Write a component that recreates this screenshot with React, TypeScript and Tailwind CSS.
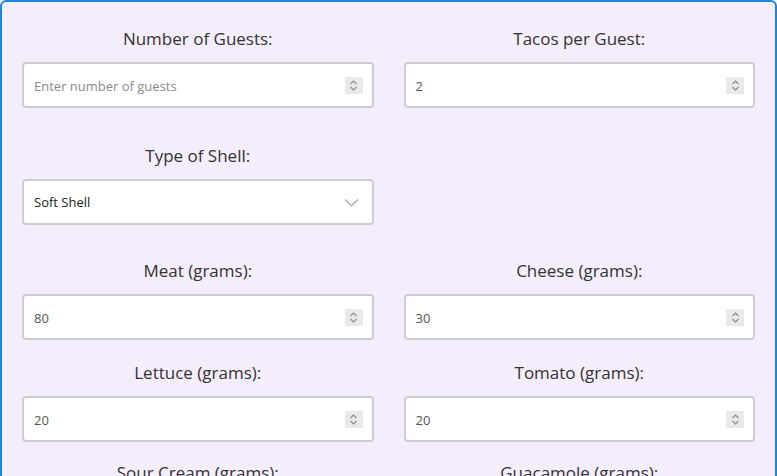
import React from "react";

const Spinner = () => (
  <div className="flex h-[17px] w-[18px] shrink-0 flex-col items-center justify-center bg-[#e9e9ec]">
    <svg width="9" height="13" viewBox="0 0 9 13" fill="none">
      <path d="M1.5 5 L4.5 2 L7.5 5" stroke="#8a8a8f" strokeWidth="1.1" />
      <path d="M1.5 8 L4.5 11 L7.5 8" stroke="#8a8a8f" strokeWidth="1.1" />
    </svg>
  </div>
);

const NumberField = ({ label, value, placeholder }: { label: string; value?: string; placeholder?: string }) => (
  <div className="flex flex-col">
    <label className="mb-[11px] text-center text-[17px] leading-[24px] text-[#333]">{label}</label>
    <div className="flex h-[46px] items-center rounded-[4px] border-2 border-[#cfcdd3] bg-white pl-[10px] pr-[9px]">
      <input
        readOnly
        value={value ?? ""}
        placeholder={placeholder}
        className="min-w-0 flex-1 bg-transparent pt-[3px] text-[13px] text-[#555] outline-none placeholder:text-[#8a8a8f]"
      />
      <Spinner />
    </div>
  </div>
);

const SelectField = ({ label, value }: { label: string; value: string }) => (
  <div className="flex flex-col">
    <label className="mb-[11px] text-center text-[17px] leading-[24px] text-[#333]">{label}</label>
    <div className="flex h-[46px] items-center justify-between rounded-[4px] border-2 border-[#cfcdd3] bg-white pl-[10px] pr-[13px]">
      <span className="pt-[2px] text-[13px] text-[#222]">{value}</span>
      <svg width="15" height="9" viewBox="0 0 15 9" fill="none">
        <path d="M1 1.5 L7.5 7.5 L14 1.5" stroke="#a9a9ad" strokeWidth="1.3" />
      </svg>
    </div>
  </div>
);

export default function App() {
  return (
    <div className="h-[476px] overflow-hidden bg-white" style={{ fontFamily: '"Open Sans", "Noto Sans", sans-serif' }}>
      <div className="min-h-[600px] rounded-[6px] border-2 border-[#1e84e3] bg-[#f3edfc] px-[20px] pt-[25px]">
        <div className="grid grid-cols-2 gap-x-[30px]">
          <NumberField label="Number of Guests:" placeholder="Enter number of guests" />
          <NumberField label="Tacos per Guest:" value="2" />
        </div>
        <div className="mt-[36px] grid grid-cols-2 gap-x-[30px]">
          <SelectField label="Type of Shell:" value="Soft Shell" />
        </div>
        <div className="mt-[34px] grid grid-cols-2 gap-x-[30px]">
          <NumberField label="Meat (grams):" value="80" />
          <NumberField label="Cheese (grams):" value="30" />
        </div>
        <div className="mt-[21px] grid grid-cols-2 gap-x-[30px]">
          <NumberField label="Lettuce (grams):" value="20" />
          <NumberField label="Tomato (grams):" value="20" />
        </div>
        <div className="mt-[19px] grid grid-cols-2 gap-x-[30px]">
          <NumberField label="Sour Cream (grams):" value="15" />
          <NumberField label="Guacamole (grams):" value="15" />
        </div>
      </div>
    </div>
  );
}
